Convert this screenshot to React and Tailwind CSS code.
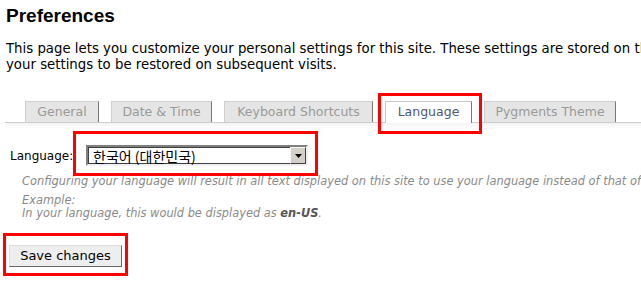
import React from 'react';

const tabs = [
    { label: 'General', w: 'w-[74px]' },
    { label: 'Date & Time', w: 'w-[101px]' },
    { label: 'Keyboard Shortcuts', w: 'w-[149px]' },
    { label: 'Language', w: 'w-[87px]', active: true },
    { label: 'Pygments Theme', w: 'w-[132px]' },
];

const Tab = ({ label, w, active }) => (
    <div
        className={
            active
                ? `${w} h-[22px] -mb-px flex items-center justify-center bg-white border border-[#c8c8c8] border-r-[#777] border-b-0 text-[#4d5770]`
                : `${w} h-[21px] flex items-center justify-center bg-[#e5e5e5] border border-[#cfcfcf] border-r-[#777] border-b-0 text-[#9a9a9a]`
        }
    >
        {label}
    </div>
);

const App = () => {
    return (
        <div className="relative w-[641px] h-[287px] overflow-hidden bg-white text-black font-['DejaVu_Sans',Verdana,sans-serif]">
            <div className="w-[760px] pl-[6px]">
                <h1 className="pt-[5px] text-[19px] leading-[22px] font-bold font-['Liberation_Sans',Arial,sans-serif]">
                    Preferences
                </h1>
                <p className="mt-[14px] text-[13.3px] leading-[16px] whitespace-nowrap">
                    This page lets you customize your personal settings for this site. These settings are stored on the client and use cookies to allow
                    <br />
                    your settings to be restored on subsequent visits.
                </p>

                <div className="mt-[28px] ml-[-1px] border-b border-[#cccccc] flex gap-[12px] pl-[20px] text-[12.5px]">
                    {tabs.map((t) => (
                        <Tab key={t.label} {...t} />
                    ))}
                </div>
                <div className="h-[6px] bg-gradient-to-b from-[#f3f3f3] to-white" />

                <div className="mt-[16px] flex items-center text-[12px]">
                    <label className="pl-[4px] w-[80px]">Language:</label>
                    <div className="w-[222px] h-[21px] flex items-stretch border-2 border-t-[#808080] border-l-[#808080] border-b-[#f0f0f0] border-r-[#f0f0f0] bg-white">
                        <div className="flex-1 border border-[#404040] border-r-0 flex items-center pl-[4px] text-[14px] font-['Noto_Sans_CJK_KR',sans-serif] leading-none">
                            한국어 (대한민국)
                        </div>
                        <div className="w-[16px] bg-[#d4d0c8] border border-t-[#f5f5f5] border-l-[#f5f5f5] border-b-[#404040] border-r-[#404040] flex items-center justify-center">
                            <svg width="7" height="4" viewBox="0 0 7 4">
                                <path d="M0 0h7L3.5 4z" fill="#000" />
                            </svg>
                        </div>
                    </div>
                </div>

                <div className="mt-[9px] pl-[16px] text-[11.4px] italic text-[#8a8a8a] leading-[13px] whitespace-nowrap">
                    <p>Configuring your language will result in all text displayed on this site to use your language instead of that of the server.</p>
                    <p className="mt-[6px]">Example:</p>
                    <p>
                        In your language, this would be displayed as <span className="font-bold text-[#555]">en-US</span>.
                    </p>
                </div>

                <button className="mt-[25px] ml-[3px] w-[113px] h-[22px] bg-[#eeeeee] text-[13px] text-black border border-t-[#dcdcdc] border-l-[#dcdcdc] border-b-[#666] border-r-[#666]">
                    Save changes
                </button>
            </div>

            {/* annotation boxes */}
            <div className="absolute left-[378px] top-[93px] w-[104px] h-[41px] border-[3px] border-[#ff0000]" />
            <div className="absolute left-[73px] top-[131px] w-[245px] h-[45px] border-[3px] border-[#ff0000]" />
            <div className="absolute left-[3px] top-[233px] w-[125px] h-[43px] border-[3px] border-[#ff0000]" />
        </div>
    );
};

export default App;
